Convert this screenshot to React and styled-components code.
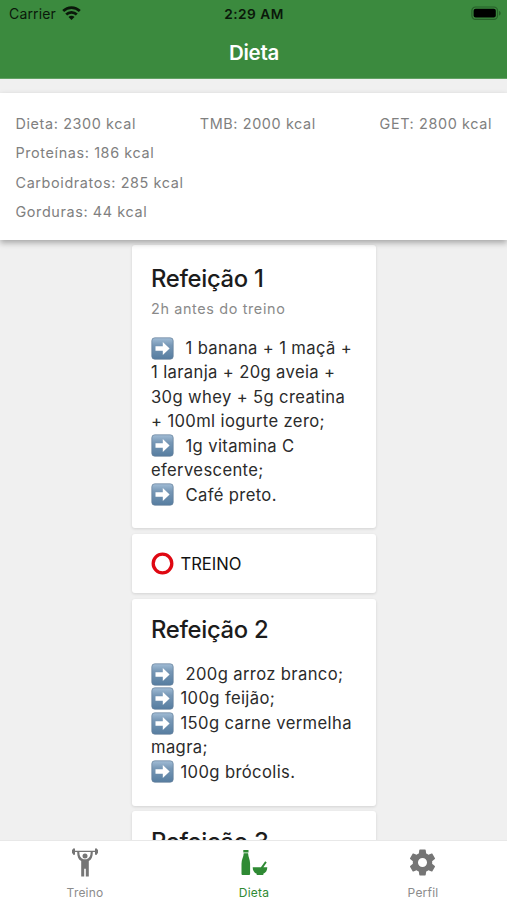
import React from 'react';
import styled, { createGlobalStyle } from 'styled-components';

const GlobalStyle = createGlobalStyle`
    * {
        box-sizing: border-box;
    }
    body {
        margin: 0;
        overflow: hidden;
        background: #f0f0f0;
        font-family: Inter, "Liberation Sans", sans-serif;
    }
`;

const Screen = styled.div`
    display: flex;
    flex-direction: column;
    height: 100vh;
    overflow: hidden;
    background: #f0f0f0;
`;

const Header = styled.header`
    flex: none;
    height: 79px;
    background: #3b8a3e;
    border-bottom: 1px solid #62a164;
`;

const StatusBar = styled.div`
    display: grid;
    grid-template-columns: 1fr auto 1fr;
    align-items: center;
    height: 27px;
    padding: 0 6px 0 9px;
    color: #0a180a;
    font-size: 14px;
`;

const Carrier = styled.div`
    display: flex;
    align-items: center;
    gap: 6px;
    letter-spacing: 0.15px;
`;

const Clock = styled.div`
    margin-right: 2px;
    font-weight: 600;
    font-size: 13.7px;
    letter-spacing: 0.5px;
`;

const BatteryIcon = styled.svg`
    justify-self: end;
`;

const ScreenTitle = styled.h1`
    margin: 0;
    padding-left: 1px;
    color: #fff;
    font-size: 20.5px;
    font-weight: 600;
    line-height: 51px;
    letter-spacing: -0.3px;
    text-align: center;
`;

const Summary = styled.section`
    position: relative;
    z-index: 1;
    flex: none;
    height: 147px;
    margin-top: 14px;
    padding: 16px 15px 0 15.5px;
    background: #fff;
    box-shadow: 0 3px 6px rgba(0, 0, 0, .3);
`;

const SummaryRow = styled.div`
    display: flex;
    justify-content: space-between;
`;

const Caption = styled.span`
    color: #808080;
    font-size: 14.4px;
    line-height: 29.3px;
    letter-spacing: 0.62px;
    white-space: nowrap;
`;

const Meals = styled.main`
    flex: 1;
    min-height: 0;
    display: flex;
    flex-direction: column;
    align-items: center;
    gap: 5.5px;
    padding-top: 5px;
    overflow: hidden;
`;

const Card = styled.article`
    flex: none;
    width: 244px;
    height: ${({ $height }) => $height};
    padding: ${({ $top }) => $top || '19px'} 19.5px 18px;
    background: #fff;
    border-radius: 3px;
    box-shadow: 0 1px 3px rgba(0, 0, 0, .12);
`;

const MealTitle = styled.h2`
    margin: 0;
    color: #1c1c1c;
    font-size: 23.8px;
    font-weight: 500;
    line-height: 30px;
    letter-spacing: -0.3px;
`;

const Subtitle = styled.div`
    height: 29px;
    color: #8a8a8a;
    font-size: 14.4px;
    line-height: 29px;
    letter-spacing: 0.64px;
`;

const Foods = styled.div`
    margin-top: ${({ $top }) => $top};
    color: #2b2b2b;
    font-size: 16.6px;
    line-height: 24.45px;
    letter-spacing: 0.37px;
`;

const Line = styled.div`
    display: flex;
    align-items: center;
    gap: ${({ $wide }) => ($wide ? '11.5px' : '6.5px')};
    height: 24.45px;
    white-space: nowrap;
`;

const Training = styled(Line)`
    height: 23px;
    color: #111;
    font-size: 16.6px;
    letter-spacing: -0.02px;
`;

const TabBar = styled.nav`
    position: relative;
    z-index: 1;
    flex: none;
    display: grid;
    grid-template-columns: repeat(3, 1fr);
    height: 60px;
    background: #fff;
    border-top: 1px solid #e8e8e8;
`;

const Tab = styled.div`
    display: flex;
    flex-direction: column;
    align-items: center;
    padding: 6px 0 0;
    color: ${({ $active }) => ($active ? '#2f8a34' : '#757575')};
`;

const TabLabel = styled.span`
    margin-top: 6.5px;
    padding-left: 1px;
    color: ${({ $active }) => ($active ? '#2f8a34' : '#8c8c8c')};
    font-size: 12px;
    line-height: 16px;
    letter-spacing: 0.2px;
`;

const WifiIcon = () => (
    <svg width="19" height="15" viewBox="0 0 19 15" fill="none" stroke="#0a180a" strokeWidth="2.7">
        <path d="M1.2 5a11.8 11.8 0 0 1 16.6 0" />
        <path d="M4.2 8.500a7.500 7.500 0 0 1 10.600 0" />
        <path d="M9.500 14 6.500 11a4.200 4.200 0 0 1 6 0z" fill="#0a180a" stroke="none" />
    </svg>
);

const Battery = () => (
    <BatteryIcon width="30" height="15" viewBox="0 0 30 15">
        <rect x=".9" y="1" width="25.6" height="12.4" rx="3.6" fill="none" stroke="#276029" strokeWidth="1.2" />
        <rect x="2.6" y="2.8" width="22.2" height="8.8" rx="2" fill="#000" />
        <path d="M28 5c2.2.7 2.2 3.9 0 4.6z" fill="#276029" />
    </BatteryIcon>
);

const Arrow = () => (
    <svg width="23" height="23" viewBox="0 0 23 23">
        <defs>
            <linearGradient id="arrowFill" x2="0" y2="1">
                <stop stopColor="#a2bdd6" />
                <stop offset=".35" stopColor="#7898b6" />
                <stop offset="1" stopColor="#567da0" />
            </linearGradient>
        </defs>
        <rect x=".8" y=".8" width="21.4" height="21.4" rx="3" fill="url(#arrowFill)" stroke="#647f99" strokeWidth=".7" />
        <path d="M4.500 9.300h7.300V5l6.800 6.500-6.800 6.500v-4.300H4.500z" fill="#fff" />
    </svg>
);

const Ring = () => (
    <svg width="23" height="23" viewBox="0 0 23 23">
        <circle cx="11.500" cy="11.500" r="9.300" fill="none" stroke="#df0812" strokeWidth="3.300" />
    </svg>
);

const LifterIcon = () => (
    <svg width="28" height="31" viewBox="0 0 28 31" fill="currentColor">
        <path d="M1 2.500h1V1.500h2v2.200h20V1.500h2v1h1v4h-1v1.200h-2V5H4v2.700H2V6.500H1z" />
        <circle cx="14" cy="9" r="2.500" />
        <path d="M6.200 5h2.100c.1 4.200 1.300 6.400 4.200 7.200h3c2.900-.8 4.100-3 4.200-7.200h2.100c0 4.800-1.200 7.500-4 9.100v15.400h-3v-7.700h-1.600v7.700h-3V14.100C7.400 12.500 6.200 9.800 6.200 5z" />
    </svg>
);

const FoodIcon = () => (
    <svg width="28" height="31" viewBox="0 0 28 31" fill="currentColor">
        <path d="M3.300 3h5.200v2.600H3.300zM3.700 6.300h4.400c.1 3.800 2 6.200 2 10.500v10c0 .8-.5 1.300-1.300 1.300H2.800c-.8 0-1.300-.5-1.300-1.300v-10c0-4.300 2.100-6.700 2.200-10.500z" />
        <path d="M12.700 20.300h8.200l4.300-6 1.500 1.100-3.300 4.900h3.900c0 3.500-1.600 5.500-4 6.400v1.400h-6.600v-1.400c-2.400-.9-4-2.900-4-6.400z" />
    </svg>
);

const GearIcon = () => (
    <svg width="31" height="31" viewBox="0 0 24 24" fill="currentColor">
        <path d="M12 15.500A3.500 3.500 0 0 1 8.500 12 3.500 3.500 0 0 1 12 8.500a3.500 3.500 0 0 1 3.500 3.500 3.500 3.500 0 0 1-3.500 3.500m7.430-2.530c.04-.32.07-.64.07-.97s-.03-.66-.07-1l2.110-1.630c.19-.15.24-.42.12-.64l-2-3.460c-.12-.22-.39-.31-.61-.22l-2.490 1c-.52-.39-1.060-.73-1.690-.98l-.37-2.650A.506.506 0 0 0 14 2h-4c-.25 0-.46.18-.5.42l-.37 2.650c-.63.25-1.170.59-1.690.98l-2.490-1c-.22-.09-.49 0-.61.22l-2 3.460c-.13.22-.07.49.12.64L4.570 11c-.04.34-.07.67-.07 1s.03.65.07.97l-2.110 1.660c-.19.15-.25.42-.12.64l2 3.460c.12.22.39.3.61.22l2.490-1.010c.52.4 1.060.74 1.690.99l.37 2.650c.04.24.25.42.5.42h4c.25 0 .46-.18.5-.42l.37-2.650c.63-.26 1.170-.59 1.690-.99l2.490 1.010c.22.08.49 0 .61-.22l2-3.460c.12-.22.07-.49-.12-.64z" />
    </svg>
);

const firstMeal = [
    { text: '1 banana + 1 maçã +', arrow: true, wide: true },
    { text: '1 laranja + 20g aveia +' },
    { text: '30g whey + 5g creatina' },
    { text: '+ 100ml iogurte zero;' },
    { text: '1g vitamina C', arrow: true, wide: true },
    { text: 'efervescente;' },
    { text: 'Café preto.', arrow: true, wide: true },
];

const secondMeal = [
    { text: '200g arroz branco;', arrow: true, wide: true },
    { text: '100g feijão;', arrow: true },
    { text: '150g carne vermelha', arrow: true },
    { text: 'magra;' },
    { text: '100g brócolis.', arrow: true },
];

const FoodList = ({ items, top }) => (
    <Foods $top={top}>
        {items.map(({ text, arrow, wide }) => (
            <Line key={text} $wide={wide}>
                {arrow && <Arrow />}
                <span>{text}</span>
            </Line>
        ))}
    </Foods>
);

const App = () => (
    <Screen>
        <GlobalStyle />
        <Header>
            <StatusBar>
                <Carrier>Carrier <WifiIcon /></Carrier>
                <Clock>2:29 AM</Clock>
                <Battery />
            </StatusBar>
            <ScreenTitle>Dieta</ScreenTitle>
        </Header>
        <Summary>
            <SummaryRow>
                <Caption>Dieta: 2300 kcal</Caption>
                <Caption>TMB: 2000 kcal</Caption>
                <Caption>GET: 2800 kcal</Caption>
            </SummaryRow>
            <SummaryRow><Caption>Proteínas: 186 kcal</Caption></SummaryRow>
            <SummaryRow><Caption>Carboidratos: 285 kcal</Caption></SummaryRow>
            <SummaryRow><Caption>Gorduras: 44 kcal</Caption></SummaryRow>
        </Summary>
        <Meals>
            <Card $height="283px">
                <MealTitle>Refeição 1</MealTitle>
                <Subtitle>2h antes do treino</Subtitle>
                <FoodList items={firstMeal} top="13px" />
            </Card>
            <Card $height="59.5px" $top="18.5px">
                <Training><Ring /><span>TREINO</span></Training>
            </Card>
            <Card $height="207px" $top="16px">
                <MealTitle>Refeição 2</MealTitle>
                <FoodList items={secondMeal} top="17.5px" />
            </Card>
            <Card $height="207px" $top="16px">
                <MealTitle>Refeição 3</MealTitle>
            </Card>
        </Meals>
        <TabBar>
            <Tab><LifterIcon /><TabLabel>Treino</TabLabel></Tab>
            <Tab $active><FoodIcon /><TabLabel $active>Dieta</TabLabel></Tab>
            <Tab><GearIcon /><TabLabel>Perfil</TabLabel></Tab>
        </TabBar>
    </Screen>
);

export default App;
